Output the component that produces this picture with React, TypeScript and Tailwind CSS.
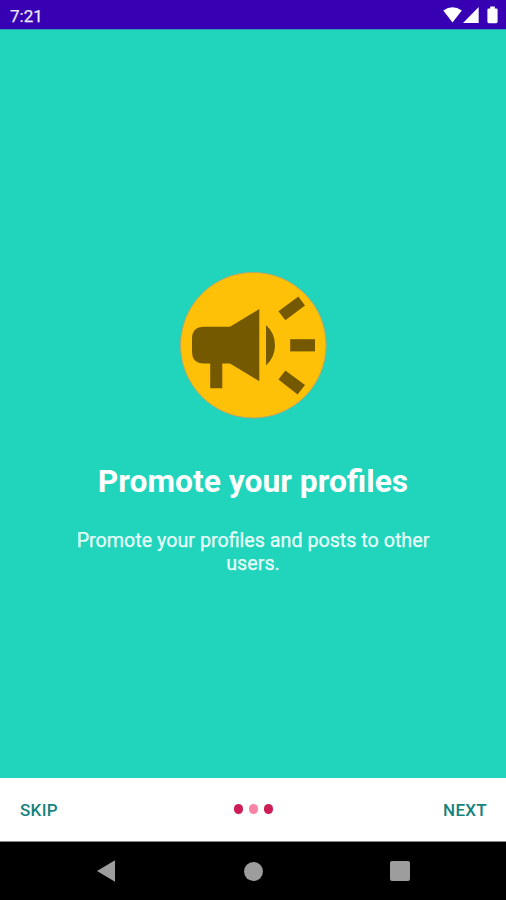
import React from 'react';

const PromoteIcon: React.FC = () => (
  <svg className="w-[148px] h-[148px]" viewBox="179 271 148 148">
    <circle cx="253.3" cy="345.2" r="72.8" fill="#ffc107" stroke="#b5a56c" strokeWidth="1" />
    <g fill="#755900">
      <path d="M204 326.8H230L259.3 309V381.2L230 363.4H222.3V388.2H210.2V363.4H204Q192 363.4 192 351.4V338.8Q192 326.8 204 326.8Z" />
      <path d="M266 325Q275 333 275 345.2Q275 357 266 365.6Z" />
      <path d="M278.4 311.2L298.4 296.4L305 305.4L285.4 320.2Z" />
      <path d="M290.2 339.2H315V351.4H290.2Z" />
      <path d="M285.4 370.4L305 385L297.6 394.4L278.4 379.4Z" />
    </g>
  </svg>
);

const StatusBar: React.FC = () => (
  <div className="h-[29px] shrink-0 bg-[#3700b3] flex items-center justify-between pl-2.5 pr-[7px] pt-[3px]">
    <span className="text-[17px] leading-none text-[#efe8ff] [-webkit-text-stroke:0.25px_#efe8ff]">7:21</span>
    <svg className="w-[56px] h-[20px]" viewBox="443 5.6 56 20" fill="#ffffff">
      <path d="M443.3 10Q452.5 3.6 461.8 10L452.5 22.2Z" />
      <path d="M478.7 6.6V22.7H463Z" />
      <path d="M490.2 6.2H494.8V8H496.2Q497.6 8 497.6 9.4V21.4Q497.6 22.8 496.2 22.8H488.8Q487.4 22.8 487.4 21.4V9.4Q487.4 8 488.8 8H490.2Z" />
    </svg>
  </div>
);

const dots = ['bg-[#cc1d56]', 'bg-[#f982a7]', 'bg-[#cc1d56]'];

const NavigationBar: React.FC = () => (
  <div className="h-[58px] shrink-0 bg-black flex items-center justify-center gap-[127px]">
    <svg className="w-[20px] h-[24px]" viewBox="0 0 20 24" fill="#9d9d9d">
      <path d="M0 12L18 1.3V22.7Z" />
    </svg>
    <div className="w-[19px] h-[19px] rounded-full bg-[#9d9d9d]" />
    <div className="w-[20px] h-[20px] rounded-[2px] bg-[#9d9d9d]" />
  </div>
);

export default function App() {
  return (
    <div className="w-[506px] h-[900px] flex flex-col overflow-hidden font-['Roboto',sans-serif]">
      <StatusBar />

      <main className="flex-1 bg-[#20d5bc] border-t border-[#2b9dba] flex flex-col items-center pt-[241px] text-white text-center">
        <PromoteIcon />
        <h1 className="mt-[43px] text-[31.8px] leading-[38px] font-bold">Promote your profiles</h1>
        <p className="mt-[29px] w-[380px] text-[19.7px] leading-[23px] text-[#e9fffa] [-webkit-text-stroke:0.25px_#e9fffa]">
          Promote your profiles and posts to other users.
        </p>
      </main>

      <div className="h-[64px] shrink-0 bg-white border-b border-[#888888] grid grid-cols-3 items-center pl-5 pr-[19px] text-[17px] font-medium text-[#16827c]">
        <button className="justify-self-start pt-[3px] tracking-[0.3px]">SKIP</button>
        <div className="flex gap-1.5 justify-self-center -mt-0.5">
          {dots.map((color, i) => (
            <span key={i} className={`w-[9px] h-[10px] rounded-full ${color}`} />
          ))}
        </div>
        <button className="justify-self-end pt-[3px] tracking-[0.3px]">NEXT</button>
      </div>

      <NavigationBar />
    </div>
  );
}
